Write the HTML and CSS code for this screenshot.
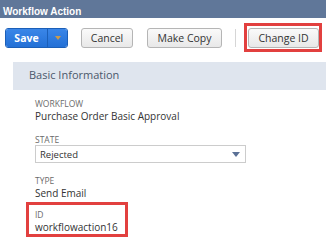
FILE: index.html
```html
<!DOCTYPE html>
<html lang="en">
<head>
    <meta charset="UTF-8">
    <meta name="viewport" content="width=device-width, initial-scale=1.0">
    <title>Workflow Action</title>
    <link rel="stylesheet" href="styles.css">
</head>
<body>
    <div class="titlebar">Workflow Action</div>

    <div class="toolbar">
        <div class="split-btn">
            <button type="button" class="btn-save">Save</button>
            <button type="button" class="btn-more"><span class="tri-down"></span></button>
        </div>
        <button type="button" class="btn btn-cancel">Cancel</button>
        <button type="button" class="btn btn-copy">Make Copy</button>
        <span class="sep"></span>
        <button type="button" class="btn btn-change">Change ID</button>
    </div>

    <div class="section">
        <div class="section-head">Basic Information</div>
        <div class="fields">
            <div class="field field-workflow">
                <div class="label">Workflow</div>
                <div class="value">Purchase Order Basic Approval</div>
            </div>
            <div class="field field-state">
                <div class="label">State</div>
                <div class="select">
                    <span>Rejected</span>
                    <span class="select-arrow"></span>
                </div>
            </div>
            <div class="field">
                <div class="label">Type</div>
                <div class="value">Send Email</div>
            </div>
            <div class="field">
                <div class="label">ID</div>
                <div class="value">workflowaction16</div>
            </div>
        </div>
    </div>

    <div class="mark mark-btn"></div>
    <div class="mark mark-id"></div>
</body>
</html>
```

FILE: styles.css
```css
body {
    margin: 0;
    font-family: "Open Sans", Arial, sans-serif;
    background: #fff;
    color: #333;
    position: relative;
    width: 326px;
    height: 244px;
    overflow: hidden;
}
.titlebar {
    height: 18px;
    box-sizing: border-box;
    padding: 6px 0 0 3px;
    line-height: 12px;
    background: #607799;
    color: #fff;
    font-family: "Liberation Sans", Arial, sans-serif;
    font-weight: bold;
    font-size: 10px;
}
.toolbar {
    display: flex;
    align-items: center;
    padding: 10px 0 0 5px;
}
.split-btn {
    display: flex;
    height: 20px;
    width: 63px;
    box-sizing: border-box;
    border: 1px solid #1b5fb8;
    border-radius: 3px;
    overflow: hidden;
    margin-right: 13px;
}
.btn-save, .btn-more {
    border: none;
    margin: 0;
    padding: 0;
    background: linear-gradient(#3a86e8, #2370d6);
    color: #fff;
    font-family: inherit;
    font-weight: bold;
    font-size: 10.5px;
    height: 100%;
}
.btn-save {
    width: 42px;
    border-right: 1px solid #1b5fb8;
}
.btn-more {
    flex: 1;
    display: flex;
    align-items: center;
    justify-content: center;
}
.tri-down {
    width: 0;
    height: 0;
    border-left: 3px solid transparent;
    border-right: 3px solid transparent;
    border-top: 4px solid #c99a4c;
}
.btn {
    height: 20px;
    box-sizing: border-box;
    border: 1px solid #b5b5b5;
    border-radius: 3px;
    background: linear-gradient(#fafafa, #e8e8e8);
    color: #333;
    font-family: inherit;
    font-size: 10.5px;
    white-space: nowrap;
    padding: 0;
    margin: 0;
}
.btn-cancel {
    width: 52px;
    margin-right: 14px;
}
.btn-copy {
    width: 75px;
    margin-right: 13px;
}
.btn-change {
    width: 71px;
}
.sep {
    width: 1px;
    height: 18px;
    background: #d6d6d6;
    margin-right: 12px;
}
.section {
    margin: 14px 0 0 13px;
}
.section-head {
    height: 28px;
    line-height: 26px;
    background: #dfe5ee;
    color: #4b586b;
    font-size: 11px;
    padding-left: 16px;
}
.fields {
    padding: 8px 0 0 22px;
}
.field {
    margin-bottom: 9px;
}
.field-workflow {
    margin-bottom: 11px;
}
.field-state {
    margin-bottom: 12px;
}
.label {
    font-size: 8.5px;
    line-height: 11px;
    text-transform: uppercase;
    color: #6b6b6b;
}
.value {
    font-size: 10px;
    line-height: 14px;
    color: #333;
}
.select {
    width: 211px;
    height: 18px;
    box-sizing: border-box;
    border: 1px solid #cccccc;
    display: flex;
    align-items: center;
    justify-content: space-between;
    padding: 0 5px 0 4px;
    font-size: 9.5px;
    color: #333;
}
.select-arrow {
    width: 0;
    height: 0;
    border-left: 4px solid transparent;
    border-right: 4px solid transparent;
    border-top: 5px solid #5b7196;
}
.mark {
    position: absolute;
    border: 3px solid #e2403f;
    box-sizing: border-box;
}
.mark-btn {
    left: 244px;
    top: 23px;
    width: 78px;
    height: 29px;
}
.mark-id {
    left: 26px;
    top: 202px;
    width: 102px;
    height: 35px;
}
```
